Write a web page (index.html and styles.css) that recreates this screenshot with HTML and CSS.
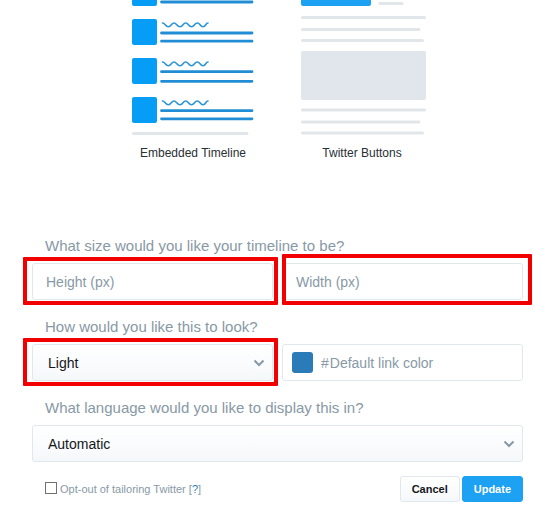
FILE: index.html
```html
<!DOCTYPE html>
<html lang="en">
<head>
    <meta charset="UTF-8">
    <meta name="viewport" content="width=device-width, initial-scale=1.0">
    <title>Customize your timeline</title>
    <link rel="stylesheet" href="styles.css">
</head>
<body>
    <main class="page">
        <div class="previews">
            <figure class="preview">
                <svg width="122" height="140" viewBox="0 0 122 140" aria-hidden="true">
                    <g fill="#069df7">
                        <rect x="0" y="-19" width="25" height="25" rx="2"/>
                        <rect x="0" y="19" width="25" height="26" rx="2"/>
                        <rect x="0" y="58" width="25" height="26" rx="2"/>
                        <rect x="0" y="97" width="25" height="26" rx="2"/>
                    </g>
                    <g transform="translate(-3)">
                        <g fill="none" stroke="#208dd4" stroke-width="2.8" stroke-linecap="round">
                            <path d="M32.500 2H123"/>
                            <path d="M32.500 33H123M32.500 41.200H123"/>
                            <path d="M32.500 71.700H123M32.500 81.300H123"/>
                            <path d="M32.500 110.700H123M32.500 118.800H123"/>
                        </g>
                        <g fill="none" stroke="#2a94d6" stroke-width="1.6" stroke-linecap="round">
                            <path id="wave" d="M33.500 23C36 23 36.500 26.700 39.300 26.700S42.500 23 45 23S48 26.700 51 26.700S54 23 56.700 23S59.500 26.700 62.500 26.700S65.500 23 68.300 23S71 26.700 74 26.700S76.500 23 79 23"/>
                            <use href="#wave" y="39"/>
                            <use href="#wave" y="78"/>
                        </g>
                        <path d="M4.500 133.500H118" stroke="#e1e6ea" stroke-width="3" stroke-linecap="round"/>
                    </g>
                </svg>
                <figcaption>Embedded Timeline</figcaption>
            </figure>
            <figure class="preview">
                <svg width="122" height="140" viewBox="0 0 122 140" aria-hidden="true">
                    <rect x="0" y="-19" width="70" height="25" rx="2" fill="#1da1f2"/>
                    <rect x="0" y="51" width="125" height="49" rx="2" fill="#e0e6eb"/>
                    <g stroke="#e1e6ea" stroke-width="3" stroke-linecap="round">
                        <path d="M79 3.500H101"/>
                        <path d="M1.500 17.500H123.500M1.500 29.500H118M1.500 40.500H121.500"/>
                        <path d="M1.500 110H123.500M1.500 122H118M1.500 133H121.500"/>
                    </g>
                </svg>
                <figcaption>Twitter Buttons</figcaption>
            </figure>
        </div>

        <form class="options">
            <fieldset class="group">
                <legend>What size would you like your timeline to be?</legend>
                <div class="row">
                    <div class="field marked">
                        <input type="text" placeholder="Height (px)" aria-label="Height (px)">
                    </div>
                    <div class="field marked marked-wide">
                        <input type="text" placeholder="Width (px)" aria-label="Width (px)">
                    </div>
                </div>
            </fieldset>

            <fieldset class="group">
                <legend>How would you like this to look?</legend>
                <div class="row">
                    <div class="field marked">
                        <select aria-label="Theme">
                            <option>Light</option>
                            <option>Dark</option>
                        </select>
                        <svg class="chevron" width="12" height="8" viewBox="0 0 12 8" aria-hidden="true"><path d="M1.500 1.500L6 6L10.500 1.500"/></svg>
                    </div>
                    <label class="field color-field">
                        <span class="swatch"></span>
                        <span class="hash">#</span>
                        <input type="text" placeholder="Default link color" aria-label="Default link color">
                    </label>
                </div>
            </fieldset>

            <div class="group">
                <label class="title" for="language">What language would you like to display this in?</label>
                <div class="field">
                    <select id="language">
                        <option>Automatic</option>
                        <option>English</option>
                    </select>
                    <svg class="chevron" width="12" height="8" viewBox="0 0 12 8" aria-hidden="true"><path d="M1.500 1.500L6 6L10.500 1.500"/></svg>
                </div>
            </div>

            <div class="footer">
                <div class="opt-out">
                    <input type="checkbox" id="opt-out">
                    <span><label for="opt-out">Opt-out of tailoring Twitter</label> [<a href="#">?</a>]</span>
                </div>
                <div class="actions">
                    <button type="button" class="btn">Cancel</button>
                    <button type="submit" class="btn btn-primary">Update</button>
                </div>
            </div>
        </form>
    </main>
</body>
</html>
```

FILE: styles.css
```css
* {
    box-sizing: border-box;
}

body {
    margin: 0;
    background-color: #fff;
    color: #292f33;
    font-family: "Liberation Sans", Arial, sans-serif;
}

.page {
    padding: 0 27px 16px 32px;
}

.previews {
    display: flex;
    justify-content: center;
    gap: 47px;
}

.preview {
    width: 122px;
    margin: 0;
    text-align: center;
    font-size: 12px;
    line-height: 16px;
}

.preview svg {
    display: block;
    margin-bottom: 5px;
    overflow: visible;
}

.options {
    margin-top: 75px;
}

.group {
    margin: 0;
    padding: 0;
    border: 0;
    min-width: 0;
}

.group + .group {
    margin-top: 17px;
}

legend,
.title {
    display: block;
    padding: 0 0 7px 13px;
    color: #8899a6;
    font-size: 15px;
    line-height: 20px;
}

.row {
    display: grid;
    grid-template-columns: 1fr 1fr;
    gap: 9px;
}

.field {
    position: relative;
}

.field input,
.field select {
    display: block;
    width: 100%;
    height: 37px;
    margin: 0;
    border: 1px solid #e1e8ed;
    border-radius: 3px;
    background-color: #fff;
    font-family: inherit;
    font-size: 14px;
}

.field input {
    padding: 0 13px;
    color: #292f33;
}

.field input::placeholder {
    color: #8899a6;
    opacity: 1;
}

.field select {
    appearance: none;
    padding: 0 32px 0 15px;
    background-image: linear-gradient(#fff, #f5f8fa);
    color: #14171a;
}

.chevron {
    position: absolute;
    top: 15px;
    right: 8px;
    fill: none;
    stroke: #8899a6;
    stroke-width: 2;
    pointer-events: none;
}

/* red frames around the settings to fill in */
.marked::after {
    content: "";
    position: absolute;
    inset: -6px -5px -5px -9px;
    border: 4px solid #f20000;
    border-radius: 1px;
    pointer-events: none;
}

.marked-wide::after {
    inset: -9px -9px -5px 0;
}

.color-field {
    display: flex;
    align-items: center;
    height: 37px;
    padding-left: 9px;
    border: 1px solid #e1e8ed;
    border-radius: 3px;
    color: #8899a6;
    font-size: 14px;
}

.color-field input {
    flex: 1;
    min-width: 0;
    height: 35px;
    padding: 0 0 0 1px;
    border: 0;
}

.swatch {
    width: 21px;
    height: 21px;
    margin-right: 8px;
    border-radius: 3px;
    background-color: #2b7bb9;
}

.footer {
    display: flex;
    align-items: center;
    justify-content: space-between;
    margin-top: 14px;
}

.opt-out {
    display: flex;
    align-items: center;
    gap: 3px;
    padding-left: 13px;
    color: #8899a6;
    font-size: 11px;
}

.opt-out input {
    appearance: none;
    width: 12px;
    height: 12px;
    margin: 0 0 3px;
    border: 1px solid #707070;
    background-color: #fff;
}

.opt-out input:checked {
    background-color: #1da1f2;
}

.opt-out a {
    color: #2b7bb9;
    text-decoration: none;
}

.actions {
    display: flex;
    gap: 2px;
}

.btn {
    height: 26px;
    padding: 0 11px;
    border: 1px solid #e1e8ed;
    border-radius: 3px;
    background-image: linear-gradient(#fff, #f5f8fa);
    color: #14171a;
    font-family: inherit;
    font-size: 11px;
    font-weight: bold;
    cursor: pointer;
}

.btn-primary {
    border-color: #1da1f2;
    background: #1da1f2;
    color: #fff;
}
```
